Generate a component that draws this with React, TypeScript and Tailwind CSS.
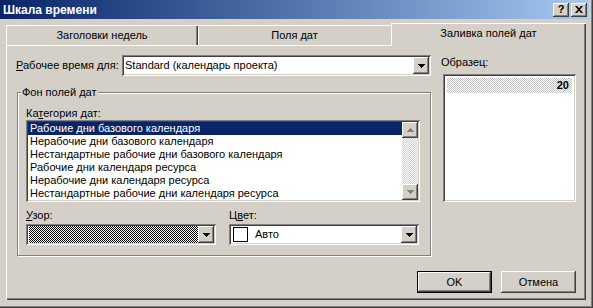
import React from "react";

const raised =
  "bg-[#d4d0c8] shadow-[inset_-1px_-1px_#404040,inset_1px_1px_#ffffff,inset_-2px_-2px_#808080]";
const sunken =
  "shadow-[inset_1px_1px_#808080,inset_-1px_-1px_#ffffff,inset_2px_2px_#404040,inset_-2px_-2px_#d4d0c8]";

const categories = [
  "Рабочие дни базового календаря",
  "Нерабочие дни базового календаря",
  "Нестандартные рабочие дни базового календаря",
  "Рабочие дни календаря ресурса",
  "Нерабочие дни календаря ресурса",
  "Нестандартные рабочие дни календаря ресурса",
];

function Tri({ up = false, color = "#000000" }: { up?: boolean; color?: string }) {
  return (
    <svg width="7" height="4" viewBox="0 0 7 4" className="block">
      <path
        d={up ? "M3 0h1v1H3z M2 1h3v1H2z M1 2h5v1H1z M0 3h7v1H0z" : "M0 0h7v1H0z M1 1h5v1H1z M2 2h3v1H2z M3 3h1v1H3z"}
        fill={color}
      />
    </svg>
  );
}

function DropButton() {
  return (
    <div className={`w-[16px] h-full flex items-center justify-center ${raised}`}>
      <Tri />
    </div>
  );
}

function Tab({ label, className }: { label: string; className: string }) {
  return <div className={`flex items-center justify-center bg-[#d4d0c8] ${className}`}>{label}</div>;
}

export default function App() {
  return (
    <div className="w-[593px] h-[308px] flex flex-col pr-[4px] bg-[#d4d0c8] text-black text-[11px] font-['Liberation_Sans',Arial,sans-serif] shadow-[inset_-1px_-1px_#404040,inset_-2px_-2px_#808080] overflow-hidden">
      {/* title bar */}
      <div className="h-[19px] flex items-center justify-between pl-[3px] pr-[2px] bg-gradient-to-r from-[#0a246a] to-[#a6caf0]">
        <span className="text-white font-bold text-[12px] leading-none">Шкала времени</span>
        <div className="flex gap-[2px]">
          <div className={`w-[16px] h-[14px] flex items-center justify-center font-bold text-[11px] leading-none ${raised}`}>?</div>
          <div className={`w-[16px] h-[14px] flex items-center justify-center ${raised}`}>
            <svg width="8" height="7" viewBox="0 0 8 7" className="block">
              <path d="M0 0h2l2 2.2L6 0h2L5 3.5 8 7H6L4 4.8 2 7H0l3-3.5z" fill="#000" />
            </svg>
          </div>
        </div>
      </div>

      {/* tabs */}
      <div className="h-[26px] flex items-end pl-[6px]">
        <Tab
          label="Заголовки недель"
          className="w-[192px] h-[20px] shadow-[inset_1px_1px_#ffffff,inset_-1px_0_#404040,inset_-2px_0_#808080]"
        />
        <Tab label="Поля дат" className="w-[193px] h-[20px] shadow-[inset_1px_1px_#ffffff]" />
        <Tab
          label="Заливка полей дат"
          className="relative z-10 w-[195px] h-[23px] -mb-px pb-[2px] shadow-[inset_1px_1px_#ffffff,inset_-1px_0_#404040,inset_-2px_0_#808080]"
        />
      </div>

      {/* tab panel */}
      <div className="ml-[6px] w-[580px] h-[255px] flex flex-col px-[10px] pt-[10px] shadow-[inset_1px_1px_#ffffff,inset_-1px_-1px_#404040,inset_-2px_-2px_#808080]">
        <div className="flex">
          {/* left column */}
          <div className="w-[415px] flex flex-col">
            <div className="h-[21px] flex items-center">
              <span className="w-[106px] whitespace-nowrap">
                <span className="underline underline-offset-[1px]">Р</span>абочее время для:
              </span>
              <div className={`w-[309px] h-[21px] p-[2px] flex bg-white ${sunken}`}>
                <div className="flex-1 flex items-center pl-[1px] whitespace-nowrap">Standard (календарь проекта)</div>
                <DropButton />
              </div>
            </div>

            <div className="relative mt-[16px] ml-[1px] w-[414px] h-[164px] border border-[#808080] shadow-[inset_1px_1px_#ffffff,1px_1px_#ffffff] pl-[8px] pt-[13px]">
              <span className="absolute left-[3px] top-[-7px] px-[1px] bg-[#d4d0c8] leading-[13px]">Фон полей дат</span>
              <div className="h-[14px] leading-[14px]">
                Ка<span className="underline underline-offset-[1px]">т</span>егория дат:
              </div>
              <div className={`w-[394px] h-[82px] p-[2px] flex bg-white ${sunken}`}>
                <div className="flex-1 flex flex-col">
                  {categories.map((c, i) => (
                    <div
                      key={c}
                      className={`h-[13px] leading-[13px] pl-[2px] whitespace-nowrap ${i === 0 ? "bg-[#0a246a] text-white" : ""}`}
                    >
                      {c}
                    </div>
                  ))}
                </div>
                <div className="w-[16px] flex flex-col">
                  <div className={`h-[16px] flex items-center justify-center ${raised}`}>
                    <Tri up color="#808080" />
                  </div>
                  <div className="flex-1 bg-[image:repeating-conic-gradient(#d4d0c8_0%_25%,#ffffff_0%_50%)] bg-[length:2px_2px] bg-size-[2px_2px]" />
                  <div className={`h-[16px] flex items-center justify-center ${raised}`}>
                    <Tri color="#808080" />
                  </div>
                </div>
              </div>

              <div className="flex gap-[13px] mt-[6px]">
                <div className="w-[190px] flex flex-col">
                  <div className="h-[14px] leading-[14px]">
                    <span className="underline underline-offset-[1px]">У</span>зор:
                  </div>
                  <div className={`mt-[2px] h-[21px] p-[2px] flex bg-white ${sunken}`}>
                    <div className="flex-1 ml-[1px] bg-[image:repeating-conic-gradient(#000000_0%_25%,#ffffff_0%_50%)] bg-[length:2px_2px] bg-size-[2px_2px]" />
                    <DropButton />
                  </div>
                </div>
                <div className="w-[190px] flex flex-col">
                  <div className="h-[14px] leading-[14px]">
                    Ц<span className="underline underline-offset-[1px]">в</span>ет:
                  </div>
                  <div className={`mt-[2px] h-[21px] p-[2px] flex bg-white ${sunken}`}>
                    <div className="flex-1 flex items-center gap-[7px] pl-[2px]">
                      <div className="w-[15px] h-[15px] border border-black bg-white" />
                      <span>Авто</span>
                    </div>
                    <DropButton />
                  </div>
                </div>
              </div>
            </div>
          </div>

          {/* right column */}
          <div className="ml-[10px] w-[135px] flex flex-col">
            <div className="h-[14px] leading-[14px]">Образец:</div>
            <div className={`mt-[5px] ml-[2px] w-[133px] h-[128px] p-[4px] bg-white ${sunken}`}>
              <div className="h-[15px] flex items-center justify-end pr-[3px] font-bold bg-[image:repeating-conic-gradient(#c0c0c0_0%_25%,#ffffff_0%_50%)] bg-[length:2px_2px] bg-size-[2px_2px]">
                20
              </div>
            </div>
          </div>
        </div>

        {/* buttons */}
        <div className="mt-[15px] flex justify-end gap-[9px]">
          <div className="w-[75px] h-[22px] border border-black">
            <div className={`w-full h-full flex items-center justify-center ${raised}`}>OK</div>
          </div>
          <div className={`w-[75px] h-[22px] flex items-center justify-center ${raised}`}>Отмена</div>
        </div>
      </div>
    </div>
  );
}
